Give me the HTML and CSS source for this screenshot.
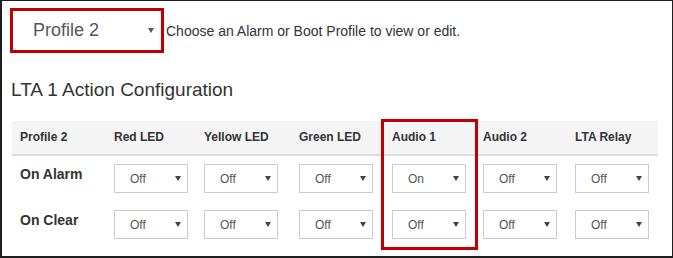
FILE: index.html
```html
<!DOCTYPE html>
<html>

<head>
<link rel="stylesheet" href="styles.css">
</head>

<body>
    <div class="frame">
        <div class="top">
            <div class="profile-pick">
                <span>Profile 2</span>
                <span class="caret big"></span>
            </div>
            <div class="hint">Choose an Alarm or Boot Profile to view or edit.</div>
        </div>

        <h1 class="title">LTA 1 Action Configuration</h1>

        <div class="grid-wrap">
            <table class="actions">
                <colgroup>
                    <col style="width: 94px">
                    <col style="width: 90px">
                    <col style="width: 95px">
                    <col style="width: 93px">
                    <col style="width: 91px">
                    <col style="width: 92px">
                    <col style="width: 91px">
                </colgroup>
                <thead>
                    <tr>
                        <th>Profile 2</th>
                        <th>Red LED</th>
                        <th>Yellow LED</th>
                        <th>Green LED</th>
                        <th>Audio 1</th>
                        <th>Audio 2</th>
                        <th>LTA Relay</th>
                    </tr>
                </thead>
                <tbody>
                    <tr>
                        <td class="label">On Alarm</td>
                        <td><div class="pick"><span>Off</span><span class="caret"></span></div></td>
                        <td><div class="pick"><span>Off</span><span class="caret"></span></div></td>
                        <td><div class="pick"><span>Off</span><span class="caret"></span></div></td>
                        <td><div class="pick"><span>On</span><span class="caret"></span></div></td>
                        <td><div class="pick"><span>Off</span><span class="caret"></span></div></td>
                        <td><div class="pick"><span>Off</span><span class="caret"></span></div></td>
                    </tr>
                    <tr>
                        <td class="label">On Clear</td>
                        <td><div class="pick"><span>Off</span><span class="caret"></span></div></td>
                        <td><div class="pick"><span>Off</span><span class="caret"></span></div></td>
                        <td><div class="pick"><span>Off</span><span class="caret"></span></div></td>
                        <td><div class="pick"><span>Off</span><span class="caret"></span></div></td>
                        <td><div class="pick"><span>Off</span><span class="caret"></span></div></td>
                        <td><div class="pick"><span>Off</span><span class="caret"></span></div></td>
                    </tr>
                </tbody>
            </table>
            <div class="col-mark"></div>
        </div>
    </div>
</body>

</html>
```

FILE: styles.css
```css
body {
    margin: 0;
    background-color: white;
    font-family: "Liberation Sans", Arial, sans-serif;
    color: #333;
}

.frame {
    width: 673px;
    height: 258px;
    box-sizing: border-box;
    border: 1px solid #1e1e1e;
    border-left-width: 2px;
    border-bottom-width: 2px;
    padding-left: 10px;
}

.top {
    display: flex;
    align-items: center;
    margin: 7px 0 0 -2px;
}

.profile-pick {
    display: flex;
    align-items: center;
    justify-content: space-between;
    width: 154px;
    height: 45px;
    box-sizing: border-box;
    border: 3px solid #c00000;
    padding: 0 7px 0 20px;
    font-size: 18px;
    color: #555;
}

.hint {
    margin-left: 2px;
    font-size: 14px;
}

.title {
    margin: 26px 0 20px -1px;
    font-size: 19px;
    line-height: 22px;
    font-weight: normal;
}

.grid-wrap {
    position: relative;
    width: 646px;
}

.actions {
    width: 646px;
    table-layout: fixed;
    border-collapse: collapse;
}

.actions th {
    padding: 8px;
    text-align: left;
    font-size: 12px;
    line-height: 17px;
    font-weight: bold;
    background-color: #f5f5f5;
    border-bottom: 2px solid #ddd;
}

.actions td {
    padding: 8px 8px 9px;
    vertical-align: top;
}

.actions td.label {
    font-size: 14px;
    line-height: 20px;
    font-weight: bold;
}

.pick {
    display: flex;
    align-items: center;
    justify-content: space-between;
    width: 74px;
    height: 29px;
    box-sizing: border-box;
    border: 1px solid #ccc;
    padding: 0 6px 0 15px;
    font-size: 12px;
    color: #555;
}

.caret {
    width: 0;
    height: 0;
    border-left: 3px solid transparent;
    border-right: 3px solid transparent;
    border-top: 5px solid #444;
}

.caret.big {
    border-top-color: #555;
}

.col-mark {
    position: absolute;
    left: 369px;
    top: -2px;
    width: 97px;
    height: 131px;
    box-sizing: border-box;
    border: 3px solid #c00000;
    pointer-events: none;
}
```
